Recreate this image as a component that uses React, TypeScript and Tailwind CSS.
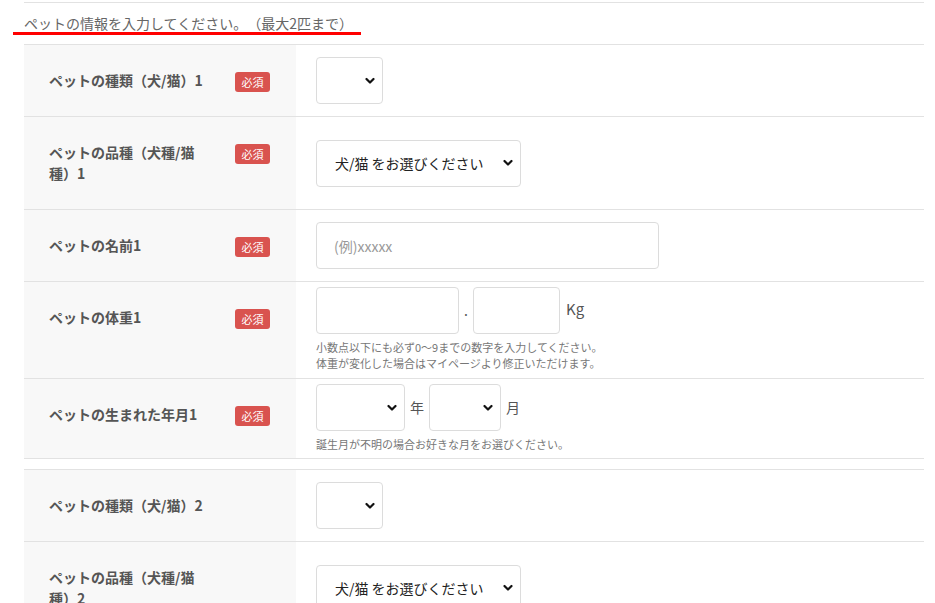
import type { ReactNode } from 'react';

const FONT = { fontFamily: '"Noto Sans CJK JP", "Liberation Sans", sans-serif' };

function Chevron() {
  return (
    <svg width="10" height="7" viewBox="0 0 10 7" className="pointer-events-none absolute right-[8px] top-1/2 -translate-y-1/2">
      <polyline points="1.5,1.5 5,5 8.5,1.5" fill="none" stroke="#111" strokeWidth="2.2" strokeLinecap="round" strokeLinejoin="round" />
    </svg>
  );
}

function Select({ width, placeholder }: { width: string; placeholder?: string }) {
  return (
    <div className={`relative h-[47px] shrink-0 ${width}`}>
      <select
        defaultValue=""
        className="h-full w-full appearance-none rounded-[4px] border border-[#dcdcdc] bg-white pl-[18px] pr-6 text-[14px] text-[#222] outline-none"
        style={FONT}
      >
        <option value="">{placeholder ?? ''}</option>
      </select>
      <Chevron />
    </div>
  );
}

function Badge() {
  return (
    <span className="-mb-[1px] mt-[2px] flex h-[20px] w-[35px] shrink-0 items-center justify-center rounded-[3px] bg-[#d9534f] text-[11px] leading-none text-white">
      必須
    </span>
  );
}

function Row({ label, required, children }: { label: ReactNode; required?: boolean; children: ReactNode }) {
  return (
    <div className="flex border-t border-[#e2e2e2]">
      <div className="flex w-[272px] shrink-0 items-start bg-[#f8f8f8] pb-[25px] pl-[25px] pr-[26px] pt-[25px]">
        <div className="w-[165px] text-[14px] font-bold leading-[21px] text-[#555] [text-spacing-trim:space-all]">{label}</div>
        {required && (
          <div className="ml-auto flex h-[21px] items-start">
            <Badge />
          </div>
        )}
      </div>
      <div className="flex flex-1 flex-col justify-center px-[20px] py-[5px]">{children}</div>
    </div>
  );
}

function Note({ children }: { children: ReactNode }) {
  return <p className="mt-[5px] text-[11px] leading-[16px] text-[#777]">{children}</p>;
}

export default function App() {
  return (
    <div className="relative min-h-[603px] bg-white text-[#333]" style={FONT}>
      <div className="ml-[24px] w-[900px] pt-[2px]">
        <div className="flex h-[42px] items-center border-t border-[#e2e2e2] text-[14px] text-[#666] [text-spacing-trim:space-all]">
          ペットの情報を入力してください。（最大2匹まで）
        </div>

        <div className="border-b border-[#e2e2e2]">
          <Row label="ペットの種類（犬/猫）1" required>
            <Select width="w-[67px]" />
          </Row>
          <Row label="ペットの品種（犬種/猫種）1" required>
            <Select width="w-[205px]" placeholder="犬/猫 をお選びください" />
          </Row>
          <Row label="ペットの名前1" required>
            <input
              placeholder="(例)xxxxx"
              className="h-[47px] w-[343px] rounded-[4px] border border-[#dcdcdc] pl-[17px] pr-[16px] text-[14px] text-[#333] outline-none placeholder:text-[#999]"
              style={FONT}
            />
          </Row>
          <Row label="ペットの体重1" required>
            <div className="flex items-center">
              <input className="h-[47px] w-[143px] rounded-[4px] border border-[#dcdcdc] outline-none" />
              <span className="w-[14px] text-center text-[14px] text-[#555]">.</span>
              <input className="h-[47px] w-[87px] rounded-[4px] border border-[#dcdcdc] outline-none" />
              <span className="-mt-[3px] ml-[6px] text-[15px] text-[#555]">Kg</span>
            </div>
            <Note>
              小数点以下にも必ず0〜9までの数字を入力してください。
              <br />
              体重が変化した場合はマイページより修正いただけます。
            </Note>
            <div className="h-[2px]" />
          </Row>
          <Row label="ペットの生まれた年月1" required>
            <div className="flex items-center">
              <Select width="w-[89px]" />
              <span className="mx-[5px] text-[14px] text-[#555]">年</span>
              <Select width="w-[72px]" />
              <span className="ml-[5px] text-[14px] text-[#555]">月</span>
            </div>
            <Note>誕生月が不明の場合お好きな月をお選びください。</Note>
            <div className="h-[1px]" />
          </Row>
        </div>

        <div className="mt-[10px]">
          <Row label="ペットの種類（犬/猫）2">
            <Select width="w-[67px]" />
          </Row>
          <Row label="ペットの品種（犬種/猫種）2">
            <Select width="w-[205px]" placeholder="犬/猫 をお選びください" />
          </Row>
        </div>
      </div>

      {/* red annotation underline */}
      <div className="absolute left-[13px] top-[32px] h-[3px] w-[348px] bg-[#ff0000]" />
    </div>
  );
}
